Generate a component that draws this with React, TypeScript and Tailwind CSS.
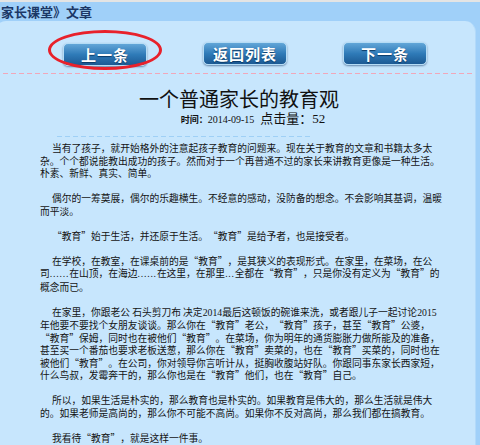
const cjk = "font-['Noto_Sans_CJK_SC',sans-serif]";
const num = "font-['Liberation_Serif',serif]";

function NavButton({ label }: { label: string }) {
  return (
    <button
      type="button"
      className={`w-[84px] h-[23px] rounded-[5px] border border-[#b5dcf5] bg-gradient-to-b from-[#62a6d8] via-[#2f7bb8] to-[#1c5a94] text-white font-bold text-[15px] leading-none tracking-[1px] shadow-[0_1px_2px_rgba(0,40,90,0.5)] [text-shadow:0_1px_1px_#0b3a66] ${cjk}`}
    >
      {label}
    </button>
  );
}

const N = ({ children }: { children: React.ReactNode }) => <span className={num}>{children}</span>;
const D = ({ children }: { children: React.ReactNode }) => (
  <span className={`${num} tracking-[0.8px]`}>{children}</span>
);
// full-width quotes, as the reference font draws them
const Q = ({ children }: { children: React.ReactNode }) => (
  <span className="whitespace-nowrap">
    <span className="inline-block indent-0 w-[1em] text-right">“</span>
    {children}
    <span className="inline-block indent-0 w-[1em] text-left">”</span>
  </span>
);

const paragraphs: React.ReactNode[] = [
  '当有了孩子，就开始格外的注意起孩子教育的问题来。现在关于教育的文章和书籍太多太杂。个个都说能教出成功的孩子。然而对于一个再普通不过的家长来讲教育更像是一种生活。朴素、新鲜、真实、简单。',
  '偶尔的一筹莫展，偶尔的乐趣横生。不经意的感动，没防备的想念。不会影响其基调，温暖而平淡。',
  <><Q>教育</Q>始于生活，并还原于生活。<Q>教育</Q>是给予者，也是接受者。</>,
  <>在学校，在教室，在课桌前的是<Q>教育</Q>，是其狭义的表现形式。在家里，在菜场，在公司<D>......</D>在山顶，在海边<D>......</D>在这里，在那里<D>...</D>全都在<Q>教育</Q>，只是你没有定义为<Q>教育</Q>的概念而已。</>,
  <>在家里，你跟老公 石头剪刀布 决定<N>2014</N>最后这顿饭的碗谁来洗，或者跟儿子一起讨论<N>2015</N>年他要不要找个女朋友谈谈。那么你在<Q>教育</Q>老公，<Q>教育</Q>孩子，甚至<Q>教育</Q>公婆，<Q>教育</Q>保姆，同时也在被他们<Q>教育</Q>。在菜场，你为明年的通货膨胀力做所能及的准备，甚至买一个番茄也要求老板送葱，那么你在<Q>教育</Q>卖菜的，也在<Q>教育</Q>买菜的，同时也在被他们<Q>教育</Q>。在公司，你对领导你言听计从，挺胸收腹站好队。你跟同事东家长西家短，什么鸟叔，发霉奔干的，那么你也是在<Q>教育</Q>他们，也在<Q>教育</Q>自己。</>,
  '所以，如果生活是朴实的，那么教育也是朴实的。如果教育是伟大的，那么生活就是伟大的。如果老师是高尚的，那么你不可能不高尚。如果你不反对高尚，那么我们都在搞教育。',
  <>我看待<Q>教育</Q>，就是这样一件事。</>,
];

export default function App() {
  return (
    <div className={`w-[480px] h-[445px] overflow-hidden bg-[#a0d0f9] flex flex-col ${cjk}`}>
      <div className="shrink-0 h-[2px] bg-[#e4e4e4]" />
      <div className="shrink-0 h-[19px] pl-[1px] flex items-center text-[13px] font-bold text-[#1b3766] leading-none">
        家长课堂》文章
      </div>

      <div className="flex-1 shrink-0 ml-[-5px] mr-[4px] rounded-t-[11px] bg-[#c7e6fd] border-r border-[#b3dafa]">
        <div className="flex gap-[56px] pl-[68px] pt-[21px]">
          <div className="relative">
            <NavButton label="上一条" />
            <div className="absolute left-[-15px] top-[-12px] w-[114px] h-[40px] rounded-[50%] border-[3px] border-[#e8212b]" />
          </div>
          <NavButton label="返回列表" />
          <NavButton label="下一条" />
        </div>

        <div className="mt-[7px] h-px bg-[repeating-linear-gradient(90deg,#f1a7b9_0_5px,transparent_5px_8px)]" />

        <h1 className="mt-[13px] pl-[8px] text-center text-[20px] leading-[24px] font-normal text-[#111]">
          一个普通家长的教育观
        </h1>
        <div className="flex items-baseline justify-center gap-[6px] pl-[36px] leading-[14px] text-[#111]">
          <span className="text-[9px] font-bold">
            时间：<span className={`${num} font-normal text-[10px]`}>2014-09-15</span>
          </span>
          <span className="text-[13px]">
            点击量：<N>52</N>
          </span>
        </div>

        <div className="mt-[9px] ml-[62px] w-[256px] h-px bg-[repeating-linear-gradient(90deg,#9fd0f6_0_5px,transparent_5px_8px)]" />

        <div className="mt-[5px] ml-[45px] w-[404px] text-[9.75px] leading-[12.5px] text-[#141414]">
          {paragraphs.map((p, i) => (
            <p key={i} className="indent-[12px] mb-[12.5px]">
              {p}
            </p>
          ))}
        </div>
      </div>
    </div>
  );
}
